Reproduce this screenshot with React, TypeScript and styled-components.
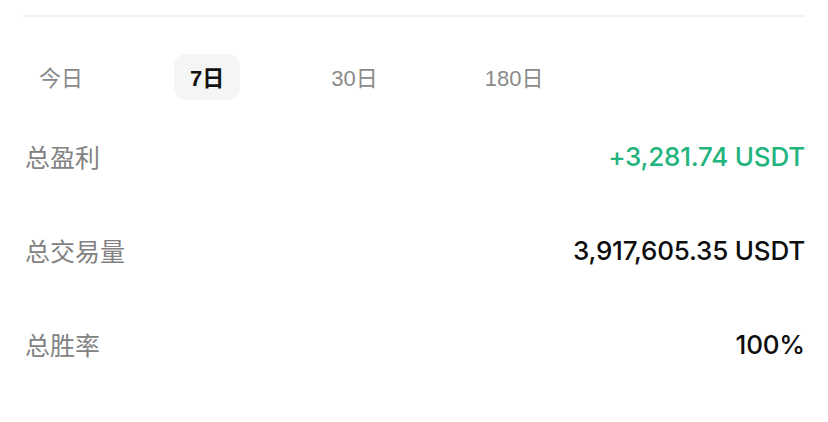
import React, { useState } from "react";
import styled, { createGlobalStyle } from "styled-components";

const GlobalStyle = createGlobalStyle`
  body {
    margin: 0;
    background: #ffffff;
    font-family: "Inter", "Noto Sans CJK SC", sans-serif;
  }
`;

const Page = styled.div`
  padding: 15px 23px 0 23px;
`;

const Divider = styled.div`
  height: 2px;
  background-color: #f2f2f2;
`;

const TabRow = styled.div`
  display: flex;
  gap: 75px;
  margin-top: 37px;
`;

const Tab = styled.button<{ $active: boolean }>`
  height: 46px;
  padding: 0 16px 3px;
  border: none;
  border-radius: 12px;
  background-color: ${(p) => (p.$active ? "#f5f5f5" : "transparent")};
  color: ${(p) => (p.$active ? "#111111" : "#8a8a8a")};
  font-family: "Liberation Sans", "Noto Sans CJK SC", sans-serif;
  font-weight: ${(p) => (p.$active ? 700 : 400)};
  font-size: 22px;
  cursor: pointer;
`;

const StatList = styled.div`
  margin-top: 9px;
  padding: 0 0 0 2px;
`;

const StatRow = styled.div`
  display: flex;
  justify-content: space-between;
  align-items: center;
  height: 94px;
`;

const Label = styled.span`
  font-family: "Noto Sans CJK SC", sans-serif;
  font-size: 25px;
  color: #828282;
`;

const Value = styled.span<{ $positive?: boolean }>`
  font-family: "Inter", sans-serif;
  font-weight: 500;
  font-size: 26px;
  letter-spacing: -0.2px;
  color: ${(p) => (p.$positive ? "#22b47d" : "#0d0d0d")};
`;

const periods = ["今日", "7日", "30日", "180日"];

const stats = [
  { label: "总盈利", value: "+3,281.74 USDT", positive: true },
  { label: "总交易量", value: "3,917,605.35 USDT" },
  { label: "总胜率", value: "100%" },
];

const App = () => {
  const [period, setPeriod] = useState<string>("7日");

  return (
    <>
      <GlobalStyle />
      <Page>
        <Divider />
        <TabRow>
          {periods.map((p) => (
            <Tab key={p} $active={p === period} onClick={() => setPeriod(p)}>
              {p}
            </Tab>
          ))}
        </TabRow>
        <StatList>
          {stats.map((s) => (
            <StatRow key={s.label}>
              <Label>{s.label}</Label>
              <Value $positive={s.positive}>{s.value}</Value>
            </StatRow>
          ))}
        </StatList>
      </Page>
    </>
  );
};

export default App;
